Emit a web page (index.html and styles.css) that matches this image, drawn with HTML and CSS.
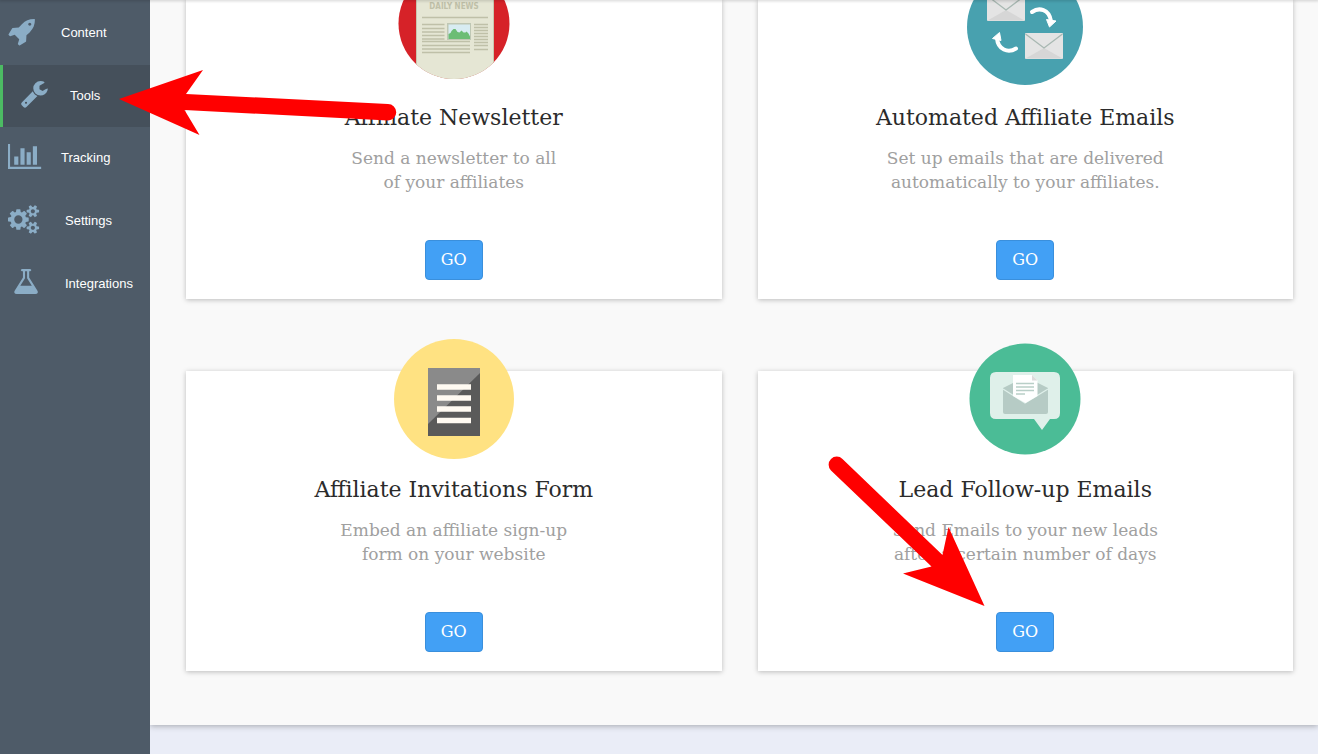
FILE: index.html
```html
<!DOCTYPE html>
<html lang="en">
<head>
<meta charset="utf-8">
<title>Tools</title>
<link rel="stylesheet" href="styles.css">
</head>
<body>
<div class="topbar-shadow"></div>
<div class="app">
  <nav class="sidebar" aria-label="Main">
    <ul class="nav-list">
      <li><a class="nav-link" href="#content">
        <svg class="nav-icon" viewBox="0 0 1792 1792" preserveAspectRatio="xMinYMid meet" aria-hidden="true"><path d="M1440 448q0-40-28-68t-68-28-68 28-28 68 28 68 68 28 68-28 28-68zm224-288q0 249-75.500 430.500t-253.500 360.500q-81 80-195 176l-20 379q-2 16-16 26l-384 224q-7 4-16 4-12 0-23-9l-64-64q-13-14-8-32l85-276-281-281-276 85q-3 1-9 1-14 0-23-9l-64-64q-17-19-5-39l224-384q10-14 26-16l379-20q96-114 176-195 188-187 358-258t431-71q14 0 24 9.500t10 22.500z"/></svg>
        <span>Content</span></a></li>
      <li><a class="nav-link nav-link-active" href="#tools" aria-current="page">
        <svg class="nav-icon nav-icon-wide" viewBox="-420 0 1792 1792" preserveAspectRatio="xMinYMid meet" aria-hidden="true"><path d="M448 1472q0-26-19-45t-45-19-45 19-19 45 19 45 45 19 45-19 19-45zm644-420l-682 682q-37 37-90 37-52 0-91-37l-106-108q-38-36-38-90 0-53 38-91l681-681q39 98 114.500 173.500t173.500 114.500zm634-435q0 39-23 106-47 134-164.500 217.500t-258.500 83.500q-185 0-316.500-131.500t-131.500-316.500 131.500-316.500 316.500-131.500q58 0 121.500 16.500t107.500 46.500q16 11 16 28t-16 28l-293 169v224l193 107q5-3 79-48.500t135.500-81 70.500-35.500q15 0 23.500 10t8.500 25z"/></svg>
        <span>Tools</span></a></li>
      <li><a class="nav-link" href="#tracking">
        <svg class="nav-icon" viewBox="0 0 1792 1792" preserveAspectRatio="xMinYMid meet" aria-hidden="true"><path d="M640 896v512h-256v-512h256zm384-512v1024h-256v-1024h256zm1024 1152v128h-2048v-1536h128v1408h1920zm-640-896v768h-256v-768h256zm384-384v1152h-256v-1152h256z"/></svg>
        <span>Tracking</span></a></li>
      <li><a class="nav-link" href="#settings">
        <svg class="nav-icon nav-icon-wide" viewBox="0 0 1792 1792" preserveAspectRatio="xMinYMid meet" aria-hidden="true"><path d="M896 896q0-106-75-181t-181-75-181 75-75 181 75 181 181 75 181-75 75-181zm768 512q0-52-38-90t-90-38-90 38-38 90q0 53 37.500 90.500t90.500 37.500 90.500-37.500 37.500-90.500zm0-1024q0-52-38-90t-90-38-90 38-38 90q0 53 37.500 90.500t90.500 37.500 90.500-37.500 37.500-90.500zm-384 421v185q0 10-7 19.500t-16 10.500l-155 24q-11 35-32 76 34 48 90 115 7 11 7 20 0 12-7 19-23 30-82.500 89.500t-78.500 59.500q-11 0-21-7l-115-90q-37 19-77 31-11 108-23 155-7 24-30 24h-186q-11 0-20-7.500t-10-17.500l-23-153q-34-10-75-31l-118 89q-7 7-20 7-11 0-21-8-144-133-144-160 0-9 7-19 10-14 41-53t47-61q-23-44-35-82l-152-24q-10-1-17-9.500t-7-19.500v-185q0-10 7-19.500t16-10.500l155-24q11-35 32-76-34-48-90-115-7-11-7-20 0-12 7-20 22-30 82-89t79-59q11 0 21 7l115 90q34-18 77-32 11-108 23-154 7-24 30-24h186q11 0 20 7.500t10 17.500l23 153q34 10 75 31l118-89q8-7 20-7 11 0 21 8 144 133 144 160 0 8-7 19-12 16-42 54t-45 60q23 48 34 82l152 23q10 2 17 10.500t7 19.500zm640 533v140q0 16-149 31-12 27-30 52 51 113 51 138 0 4-4 7-122 71-124 71-8 0-46-47t-52-68q-20 2-30 2t-30-2q-14 21-52 68t-46 47q-2 0-124-71-4-3-4-7 0-25 51-138-18-25-30-52-149-15-149-31v-140q0-16 149-31 13-29 30-52-51-113-51-138 0-4 4-7 4-2 35-20t59-34 30-16q8 0 46 46.500t52 67.500q20-2 30-2t30 2q51-71 92-112l6-2q4 0 124 70 4 3 4 7 0 25-51 138 17 23 30 52 149 15 149 31zm0-1024v140q0 16-149 31-12 27-30 52 51 113 51 138 0 4-4 7-122 71-124 71-8 0-46-47t-52-68q-20 2-30 2t-30-2q-14 21-52 68t-46 47q-2 0-124-71-4-3-4-7 0-25 51-138-18-25-30-52-149-15-149-31v-140q0-16 149-31 13-29 30-52-51-113-51-138 0-4 4-7 4-2 35-20t59-34 30-16q8 0 46 46.500t52 67.500q20-2 30-2t30 2q51-71 92-112l6-2q4 0 124 70 4 3 4 7 0 25-51 138 17 23 30 52 149 15 149 31z"/></svg>
        <span>Settings</span></a></li>
      <li><a class="nav-link" href="#integrations">
        <svg class="nav-icon nav-icon-wide" viewBox="-220 0 1792 1792" preserveAspectRatio="xMinYMid meet" aria-hidden="true"><path d="M1591 1448q56 89 21.500 152.500t-140.500 63.500h-1152q-106 0-140.500-63.500t21.500-152.500l503-793v-399h-64q-26 0-45-19t-19-45 19-45 45-19h512q26 0 45 19t19 45-19 45-45 19h-64v399zm-779-725l-272 429h712l-272-429-20-31v-436h-128v436z"/></svg>
        <span>Integrations</span></a></li>
    </ul>
  </nav>

  <div class="page">
    <main class="content">
      <section class="card">
        <svg class="card-icon" viewBox="0 0 120 120" aria-hidden="true">
          <defs><clipPath id="news-clip"><circle cx="60" cy="56.500" r="55.500"/></clipPath></defs>
          <g clip-path="url(#news-clip)">
            <rect width="120" height="120" fill="#d62228"/>
            <rect x="22" y="10" width="78" height="110" fill="#c9c6ae"/>
            <rect x="23" y="10" width="76" height="110" fill="#e5e6d4"/>
            <text class="news-title" x="60" y="42" text-anchor="middle">DAILY NEWS</text>
            <path d="M28 50.500h66M28 57.500h22.500M28 61.500h22.500M28 65h22.500M28 68.500h22.500M28 72h22.500M28 74.500h48M28 78.500h48M28 82h48M28 85.500h48" stroke="#bfc0a8" stroke-width="1.400"/>
            <path d="M80 57.500h14M80 60.500h14M80 63.500h14M80 66.500h14M80 69.500h14M80 72.500h14M80 75.500h14M80 78.500h14M80 82.500h14" stroke="#bfc0a8" stroke-width="1.500"/>
            <rect x="53" y="56" width="24" height="17" fill="#bfc7b4"/>
            <rect x="54.500" y="57.500" width="21.500" height="14.500" fill="#d8ecf2"/>
            <path d="M54.500 72v-5l2-1 1-2 2-2h2l2 3 2 .5 2-2 2 2h2l1-1 2 2 1.500 3v2.500z" fill="#6bbd75"/>
          </g>
        </svg>
        <h2 class="card-title">Affiliate Newsletter</h2>
        <p class="card-text">Send a newsletter to all<br>of your affiliates</p>
        <button class="go" type="button">GO</button>
      </section>

      <section class="card">
        <svg class="card-icon" viewBox="0 0 120 120" aria-hidden="true">
          <circle cx="60" cy="60" r="58" fill="#48a1af"/>
          <g id="mail">
            <rect x="22" y="28" width="38" height="26" rx="1" fill="#e4e4e4"/>
            <path d="M22.500 53.500L41 43l18.500 10.500z" fill="#d6d6d6"/>
            <path d="M22.500 29L41 43l18.500-14" fill="none" stroke="#a8b8b2" stroke-width="1.300"/>
          </g>
          <use href="#mail" x="38" y="38"/>
          <path d="M67 45c7-5 17-3 19 9" fill="none" stroke="#fff" stroke-width="4" stroke-linecap="round"/>
          <path d="M81.500 52.500l9.500 1.500-6.500 6z" fill="#fff" stroke="#fff"/>
          <path d="M51 81.500c-8 5-18 1-19-10" fill="none" stroke="#fff" stroke-width="4" stroke-linecap="round"/>
          <path d="M27.500 71.500l8.500 2-1.500-8z" fill="#fff" stroke="#fff"/>
        </svg>
        <h2 class="card-title">Automated Affiliate Emails</h2>
        <p class="card-text">Set up emails that are delivered<br>automatically to your affiliates.</p>
        <button class="go" type="button">GO</button>
      </section>

      <section class="card">
        <svg class="card-icon" viewBox="0 0 120 120" aria-hidden="true">
          <circle cx="60" cy="60" r="60" fill="#ffe282"/>
          <rect x="34" y="29" width="52" height="68" fill="#5a5a5a"/>
          <path d="M34 29h52v5L34 85z" fill="#8a8a8a"/>
          <path d="M43 48h34M43 59h34M43 70h34M43 81.500h34" stroke="#fffaf2" stroke-width="5.500"/>
        </svg>
        <h2 class="card-title">Affiliate Invitations Form</h2>
        <p class="card-text">Embed an affiliate sign-up<br>form on your website</p>
        <button class="go" type="button">GO</button>
      </section>

      <section class="card">
        <svg class="card-icon" viewBox="0 0 120 120" aria-hidden="true">
          <circle cx="60" cy="60" r="55.500" fill="#4bbc96"/>
          <path d="M31 33h58q6 0 6 6v35q0 6-6 6h-4l-8 11-8-11H31q-6 0-6-6V39q0-6 6-6z" fill="#dff0ea"/>
          <path d="M38 49l12-6h21l12 6v24q0 2-2 2H40q-2 0-2-2z" fill="#b6cbc5"/>
          <path d="M38 50l22 14 23-14" fill="none" stroke="#dff0ea" stroke-width="1.300"/>
          <path d="M48 36h19l5.500 5.500v15.500L60.500 64 48 57z" fill="#fff"/>
          <path d="M67 36l5.500 5.500H67z" fill="#dcdcdc"/>
          <path d="M51 44.500h18M51 48h18M51 51.500h18M51 55h9" stroke="#b9cfc8" stroke-width="1.500"/>
        </svg>
        <h2 class="card-title">Lead Follow-up Emails</h2>
        <p class="card-text">Send Emails to your new leads<br>after a certain number of days</p>
        <button class="go" type="button">GO</button>
      </section>
    </main>
  </div>
</div>

<svg class="annotations" aria-hidden="true">
  <path d="M119 99L203 70L186 94L388 104A8 8 0 0 1 388 120.500L184.500 110L199.500 135Z"/>
  <path d="M984.500 606L948.500 527L942.500 555L842.500 459A8 8 0 0 0 831 470.500L931.500 566.500L903 573.500Z"/>
</svg>
</body>
</html>
```
FILE: styles.css
```css
* {
  box-sizing: border-box;
}

body {
  margin: 0;
  background: #eaedf7;
  font-family: "DejaVu Serif", serif;
  color: #2b2b2b;
}

.topbar-shadow {
  position: fixed;
  top: 0;
  left: 0;
  right: 0;
  z-index: 2;
  height: 0;
  box-shadow: 0 0 3px 1px rgba(0, 0, 0, 0.2);
}

.app {
  display: flex;
  min-height: 100vh;
  overflow: hidden;
}

.sidebar {
  position: relative;
  z-index: 1;
  flex: 0 0 150px;
  background: #4e5b68;
}

.nav-list {
  display: grid;
  grid-auto-rows: 1fr;
  box-sizing: content-box;
  height: 313px;
  margin: 0;
  padding: 2px 0 0;
  list-style: none;
}

.nav-link {
  display: flex;
  align-items: center;
  gap: 13px;
  height: 100%;
  padding-left: 8px;
  font: 13px/16px "Liberation Sans", Arial, sans-serif;
  color: #fff;
  text-decoration: none;
}

.nav-link-active {
  padding-left: 10px;
  border-left: 3px solid #4cbb63;
  background: #45505b;
}

.nav-icon {
  flex: none;
  width: 40px;
  height: 29px;
  margin-bottom: 4px;
  overflow: visible;
  fill: #8badc6;
}

.nav-icon-wide {
  width: 44px;
}

.page {
  flex: 1;
  min-width: 0;
}

.content {
  display: grid;
  grid-template-columns: 1fr 1fr;
  gap: 72px 36px;
  margin-top: -1px;
  padding: 0 25px 54px 36px;
  background: #f9f9f9;
  box-shadow: 0 1px 6px rgba(0, 0, 0, 0.3);
}

.card {
  display: flex;
  flex-direction: column;
  align-items: center;
  height: 300px;
  padding-bottom: 19px;
  background: #fff;
  box-shadow: 0 1px 5px rgba(0, 0, 0, 0.25);
  text-align: center;
}

.card-icon {
  flex: none;
  width: 120px;
  height: 120px;
  margin-top: -32px;
}

.news-title {
  font: bold 8px "DejaVu Sans Condensed", "DejaVu Sans", sans-serif;
  fill: #bfc0a8;
}

.card-title {
  margin: 17px 0 0;
  font-size: 22px;
  font-weight: 400;
  line-height: 28px;
}

.card-text {
  margin: 14px 0 0;
  font-size: 17px;
  line-height: 24px;
  color: #a0a0a0;
}

.go {
  height: 40px;
  margin-top: auto;
  padding: 0 15px;
  border: 1px solid #3a8fdc;
  border-radius: 4px;
  background: #42a0f5;
  font: 16px/24px "DejaVu Serif", serif;
  color: #fff;
}

.annotations {
  position: absolute;
  top: 0;
  left: 0;
  z-index: 3;
  width: 100%;
  height: 100%;
  fill: #f00;
  pointer-events: none;
}
```
